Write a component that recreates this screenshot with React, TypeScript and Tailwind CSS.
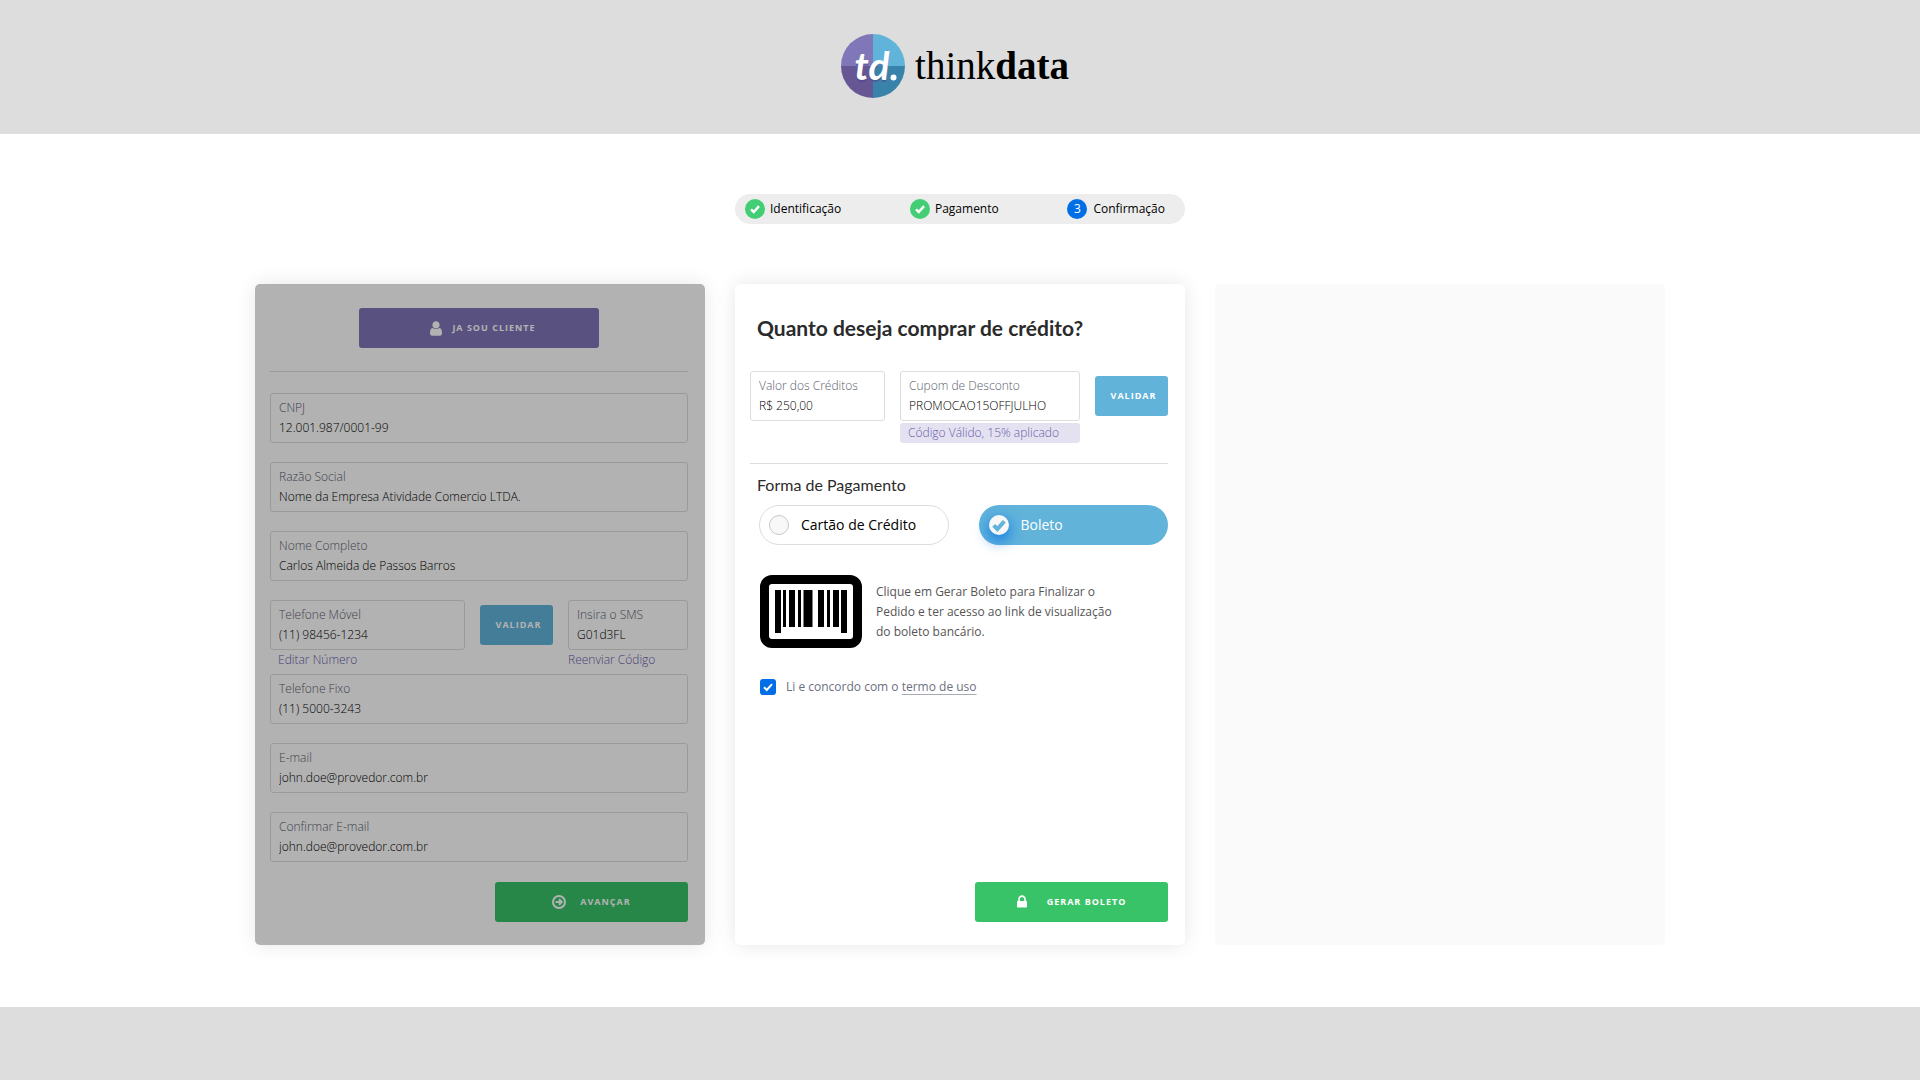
import React from "react";

type FieldProps = { id: string; label: string; value: string; type?: string };

function Field({ id, label, value, type = "text" }: FieldProps) {
  return (
    <div className="flex h-[50px] min-w-0 flex-col justify-center rounded-[3px] border border-[#dddddd] px-2 text-xs font-light">
      <label htmlFor={id} className="block h-5 truncate leading-5 text-[#5c6070]">
        {label}
      </label>
      <input
        id={id}
        type={type}
        defaultValue={value}
        className="block h-5 w-full bg-transparent leading-5 text-black outline-none"
      />
    </div>
  );
}

function Check({ className }: { className: string }) {
  return (
    <svg viewBox="0 0 12 12" fill="none" stroke="currentColor" className={className} aria-hidden="true">
      <path d="M2 6.3 4.8 9 10 3.2" />
    </svg>
  );
}

function UserIcon() {
  return (
    <svg viewBox="0 0 1280 1792" fill="currentColor" className="h-[17px] w-3" aria-hidden="true">
      <path d="M1280 1399q0 109-62.5 187t-150.5 78h-854q-88 0-150.5-78t-62.5-187q0-85 8.500-160.500t31.500-152 58.500-131 94-89 134.500-34.500q131 128 313 128t313-128q76 0 134.500 34.500t94 89 58.500 131 31.500 152 8.500 160.500zm-256-887q0 159-112.500 271.500t-271.500 112.500-271.500-112.500-112.500-271.500 112.500-271.500 271.500-112.500 271.500 112.500 112.500 271.500z" />
    </svg>
  );
}

function LockIcon() {
  return (
    <svg viewBox="0 0 1152 1792" fill="currentColor" className="h-4 w-[10px]" aria-hidden="true">
      <path d="M320 768h512v-192q0-106-75-181t-181-75-181 75-75 181v192zm832 96v576q0 40-28 68t-68 28h-960q-40 0-68-28t-28-68v-576q0-40 28-68t68-28h32v-192q0-184 132-316t316-132 316 132 132 316v192h32q40 0 68 28t28 68z" />
    </svg>
  );
}

function ArrowIcon() {
  return (
    <svg viewBox="0 0 14 14" fill="none" stroke="currentColor" strokeWidth="2" className="size-[14px]" aria-hidden="true">
      <circle cx="7" cy="7" r="6" />
      <path d="M3.600 7H9M7 4.300 9.700 7 7 9.700" />
    </svg>
  );
}

function BarcodeIcon() {
  return (
    <svg viewBox="0 0 102 73" className="h-[73px] w-[102px] shrink-0" aria-hidden="true">
      <path d="M0 12A12 12 0 0 1 12 0H90A12 12 0 0 1 102 12V61A12 12 0 0 1 90 73H12A12 12 0 0 1 0 61ZM9 12V61A3 3 0 0 0 12 64H90A3 3 0 0 0 93 61V12A3 3 0 0 0 90 9H12A3 3 0 0 0 9 12Z" fillRule="evenodd" />
      <path d="M15 15h6v43h-6zM23 15h3v37h-3zM29 15h6v37h-6zM38 15h3v37h-3zM43.500 15h9v37h-9zM58 15h6v37h-6zM67 15h3v37h-3zM73 15h6v37h-6zM81 15h6v43h-6z" />
    </svg>
  );
}

function Logo() {
  return (
    <a href="#" aria-label="thinkdata" className="flex items-center gap-[10px] text-black">
      <svg viewBox="0 0 64 64" className="size-16" aria-hidden="true">
        <defs>
          <clipPath id="disc">
            <circle cx="32" cy="32" r="32" />
          </clipPath>
        </defs>
        <g clipPath="url(#disc)">
          <rect width="32" height="32" fill="#8077b8" />
          <rect x="32" width="32" height="32" fill="#60b4da" />
          <rect y="32" width="32" height="32" fill="#675694" />
          <rect x="32" y="32" width="32" height="32" fill="#3983ab" />
        </g>
        <g fontFamily="Lato, sans-serif" fontStyle="italic" fontWeight="700" fontSize="39" textAnchor="middle">
          <text x="31" y="48" fill="#4d4285" opacity="0.5">td</text>
          <text x="31" y="46" fill="#fff">td</text>
        </g>
        <circle cx="52.500" cy="43.500" r="3" fill="#fff" />
      </svg>
      <span className="font-['Liberation_Serif',serif] text-[39px] leading-[44px]">
        think<b>data</b>
      </span>
    </a>
  );
}

const doneSteps = ["Identificação", "Pagamento"];

const action =
  "flex h-10 items-center justify-center rounded-[3px] text-[9px] font-bold tracking-[1px] text-white";

export default function App() {
  return (
    <div className="flex min-h-screen flex-col bg-white font-['Open_Sans',sans-serif] text-black">
      <header className="flex h-[134px] items-center justify-center bg-[#dddddd] pr-[10px] pb-[2px]">
        <Logo />
      </header>

      <main className="flex flex-1 flex-col items-center px-4 pt-[60px] pb-[62px]">
        <ol className="flex h-[30px] w-full max-w-[450px] items-center justify-between rounded-full bg-[#ededed] pr-5 pl-[10px] text-xs">
          {doneSteps.map((step) => (
            <li key={step} className="flex items-center gap-[5px]">
              <span className="flex size-5 items-center justify-center rounded-full bg-[#43cd74] text-white">
                <Check className="size-3 stroke-[2.5]" />
              </span>
              {step}
            </li>
          ))}
          <li aria-current="step" className="flex items-center gap-[6px]">
            <span className="flex size-5 items-center justify-center rounded-full bg-[#006fe6] text-white">3</span>
            Confirmação
          </li>
        </ol>

        <div className="mt-[60px] grid w-full max-w-[1410px] flex-1 grid-cols-3 gap-[30px]">
          <section className="relative flex flex-col rounded-[5px] bg-white pt-6 pr-[17px] pb-[23px] pl-[15px] shadow-[0_0_20px_rgba(0,0,0,0.1)]">
            <button type="button" className={`${action} w-60 gap-[10px] self-center bg-[#8074b8] pl-2`}>
              <UserIcon />
              JA SOU CLIENTE
            </button>
            <hr className="mt-[23px] border-[#dddddd]" />
            <form className="mt-[21px] flex flex-1 flex-col">
              <div className="flex flex-col gap-[19px]">
                <Field id="cnpj" label="CNPJ" value="12.001.987/0001-99" />
                <Field id="razao" label="Razão Social" value="Nome da Empresa Atividade Comercio LTDA." />
                <Field id="nome" label="Nome Completo" value="Carlos Almeida de Passos Barros" />
                <div className="grid grid-cols-[13fr_73px_8fr] items-center gap-x-[15px]">
                  <Field id="movel" label="Telefone Móvel" value="(11) 98456-1234" type="tel" />
                  <button type="button" className={`${action} bg-[#61b3da] pl-1`}>
                    VALIDAR
                  </button>
                  <Field id="sms" label="Insira o SMS" value="G01d3FL" />
                </div>
              </div>
              <div className="grid h-6 grid-cols-[13fr_73px_8fr] gap-x-[15px] text-xs font-light leading-5 text-[#6a5cab]">
                <a href="#" className="pl-2">
                  Editar Número
                </a>
                <a href="#" className="col-start-3">
                  Reenviar Código
                </a>
              </div>
              <div className="flex flex-col gap-[19px]">
                <Field id="fixo" label="Telefone Fixo" value="(11) 5000-3243" type="tel" />
                <Field id="email" label="E-mail" value="john.doe@provedor.com.br" type="email" />
                <Field id="email2" label="Confirmar E-mail" value="john.doe@provedor.com.br" type="email" />
              </div>
              <button type="button" className={`${action} mt-auto w-[193px] gap-[14px] self-end bg-[#37c268]`}>
                <ArrowIcon />
                AVANÇAR
              </button>
            </form>
            <div className="absolute inset-0 rounded-[5px] bg-black/30" />
          </section>

          <section className="flex flex-col rounded-[5px] bg-white pt-[30px] pr-[17px] pb-[23px] pl-[15px] shadow-[0_0_20px_rgba(0,0,0,0.1)]">
            <h1 className="pl-[7px] font-['Lato',sans-serif] text-[21px] font-bold leading-7 text-[#2b2b2b]">
              Quanto deseja comprar de crédito?
            </h1>
            <form className="mt-[29px] flex flex-1 flex-col">
              <div className="grid grid-cols-[3fr_4fr_73px] items-center gap-x-[15px] gap-y-[2px]">
                <Field id="valor" label="Valor dos Créditos" value="R$ 250,00" />
                <Field id="cupom" label="Cupom de Desconto" value="PROMOCAO15OFFJULHO" />
                <button type="button" className={`${action} bg-[#61b3da] pl-1`}>
                  VALIDAR
                </button>
                <p className="col-start-2 rounded-[3px] bg-[#e4e2f0] pl-2 text-xs font-light leading-5 text-[#6a5cab]">
                  Código Válido, 15% aplicado
                </p>
              </div>
              <hr className="mt-5 border-[#dddddd]" />
              <div role="radiogroup" aria-labelledby="forma" className="pt-[9px]">
                <h2 id="forma" className="pl-[7px] font-['Lato',sans-serif] text-base leading-6 text-[#2b2b2b]">
                  Forma de Pagamento
                </h2>
                <div className="mt-2 grid grid-cols-2 gap-[30px] pl-[9px] text-sm">
                  <label className="flex h-10 items-center gap-3 rounded-full border border-[#dddddd] pl-[9px]">
                    <input
                      type="radio"
                      name="pagamento"
                      className="size-5 appearance-none rounded-full border border-[#c8c8c8] bg-[#f8f8f8]"
                    />
                    Cartão de Crédito
                  </label>
                  <label className="flex h-10 items-center gap-3 rounded-full bg-[#61b3da] pl-[10px] text-white">
                    <span className="grid size-5 place-items-center text-[#61b3da]">
                      <input
                        type="radio"
                        name="pagamento"
                        defaultChecked
                        className="col-start-1 row-start-1 size-5 appearance-none rounded-full bg-[#f8f8f8] shadow-[0_5px_15px_#006fe6]"
                      />
                      <Check className="col-start-1 row-start-1 size-4 stroke-3" />
                    </span>
                    Boleto
                  </label>
                </div>
              </div>
              <div className="mt-[30px] flex items-center gap-[14px] pl-[10px]">
                <BarcodeIcon />
                <p className="max-w-[240px] text-xs leading-5 text-[#555555]">
                  Clique em Gerar Boleto para Finalizar o Pedido e ter acesso ao link de visualização do boleto bancário.
                </p>
              </div>
              <div className="mt-[29px] flex h-5 items-center gap-[10px] pl-[10px] text-xs text-[#6c7080]">
                <span className="grid size-4 place-items-center text-white">
                  <input
                    id="termo"
                    type="checkbox"
                    defaultChecked
                    className="col-start-1 row-start-1 size-4 appearance-none rounded-[3px] bg-[#006fe6]"
                  />
                  <Check className="pointer-events-none col-start-1 row-start-1 size-3 stroke-2" />
                </span>
                <label htmlFor="termo">
                  Li e concordo com o{" "}
                  <a href="#" className="underline decoration-[#a8aab4] decoration-1 underline-offset-[3px]">
                    termo de uso
                  </a>
                </label>
              </div>
              <button type="button" className={`${action} mt-auto w-[193px] gap-5 self-end bg-[#39c368]`}>
                <LockIcon />
                GERAR BOLETO
              </button>
            </form>
          </section>

          <section aria-label="Confirmação" className="rounded-[5px] bg-[#fafafa]" />
        </div>
      </main>

      <footer className="h-[73px] bg-[#dddddd]" />
    </div>
  );
}
